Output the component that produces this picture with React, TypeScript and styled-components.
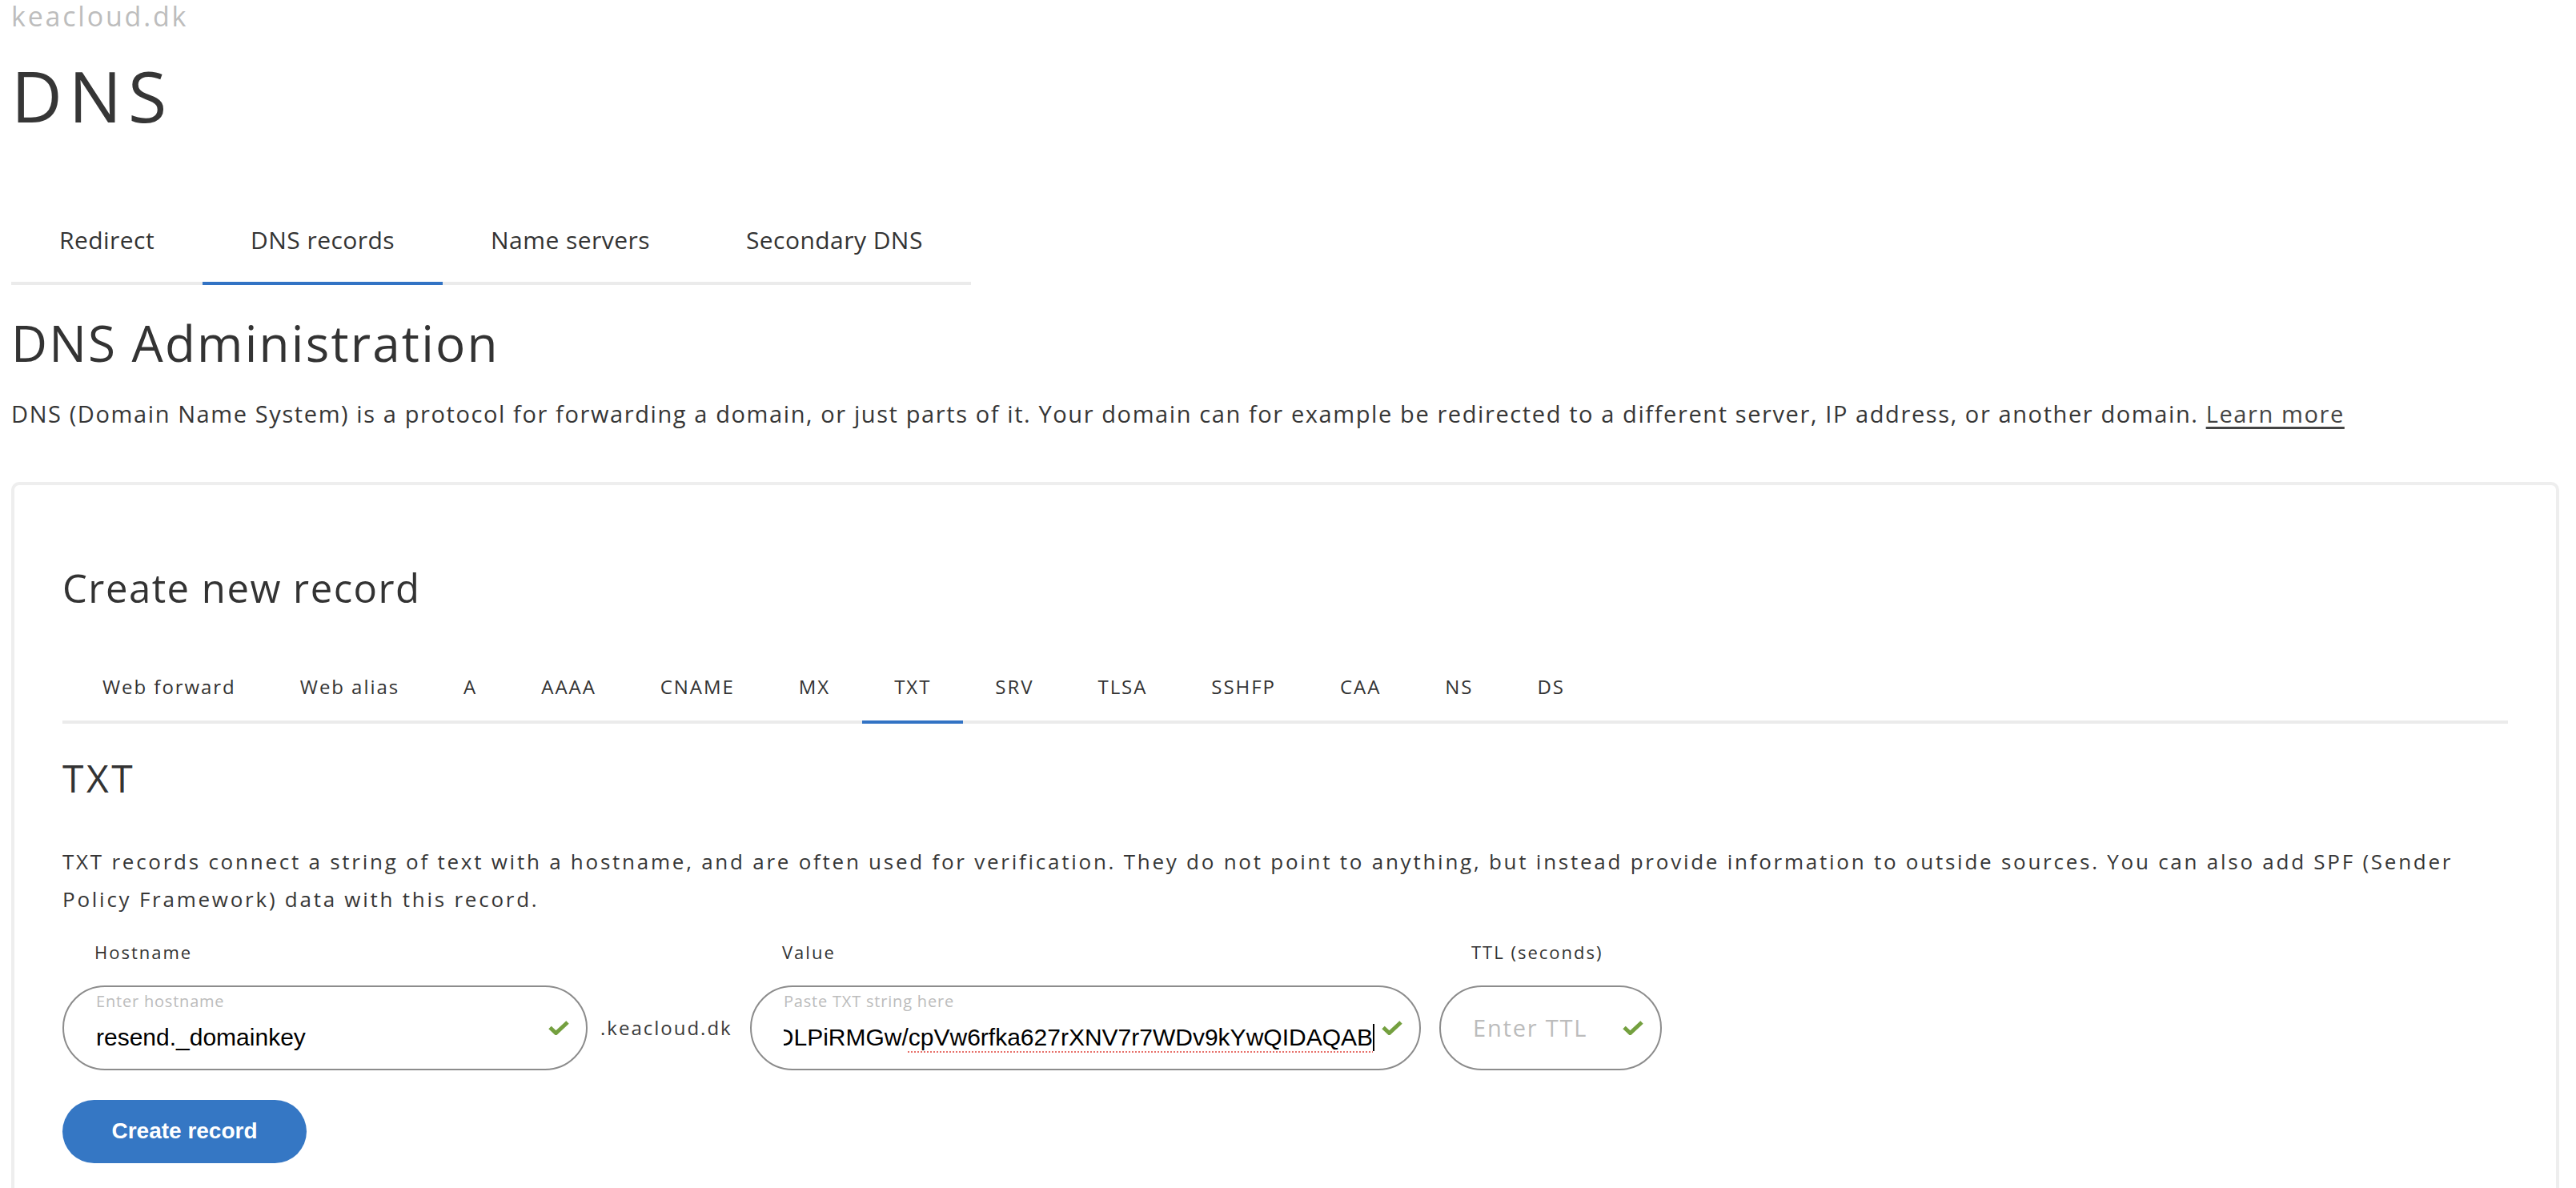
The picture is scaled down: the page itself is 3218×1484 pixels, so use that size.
import React from "react";
import styled, { createGlobalStyle } from "styled-components";

const GlobalStyle = createGlobalStyle`
  html, body {
    margin: 0;
    padding: 0;
    background: #ffffff;
  }
  body {
    font-family: "Open Sans", "Noto Sans", sans-serif;
    color: #333333;
    overflow: hidden;
  }
  * { box-sizing: border-box; }
`;

const Page = styled.div`
  padding: 0 21px 0 14px;
`;

const Domain = styled.div`
  font-size: 34px;
  line-height: 40px;
  letter-spacing: 2.8px;
  color: #bdbdbd;
`;

const PageTitle = styled.h1`
  margin: 29px 0 0;
  font-size: 88px;
  line-height: 100px;
  font-weight: 400;
  letter-spacing: 8px;
  color: #363636;
`;

const MainTabs = styled.nav`
  display: flex;
  width: fit-content;
  margin-top: 91px;
`;

const MainTab = styled.div<{ $active?: boolean }>`
  padding: 20px 60px 32px;
  font-size: 30px;
  line-height: 40px;
  letter-spacing: 0.45px;
  color: #333333;
  border-bottom: 4px solid ${(p) => (p.$active ? "#3273c4" : "#ebebeb")};
  white-space: nowrap;
`;

const SectionTitle = styled.h2`
  margin: 34px 0 0;
  font-size: 62px;
  line-height: 76px;
  font-weight: 400;
  letter-spacing: 2.2px;
  color: #333333;
`;

const Lead = styled.p`
  margin: 31px 0 0;
  font-size: 29px;
  line-height: 40px;
  letter-spacing: 1.6px;
  color: #363636;
  white-space: nowrap;
`;

const LearnMore = styled.a`
  color: #444444;
  text-decoration: underline;
  text-decoration-thickness: 3px;
  text-underline-offset: 5px;
`;

const Card = styled.section`
  margin-top: 65px;
  border: 4px solid #eeeeee;
  border-radius: 10px;
  padding: 98px 60px 200px;
`;

const CardTitle = styled.h2`
  margin: 0;
  font-size: 49px;
  line-height: 60px;
  font-weight: 400;
  letter-spacing: 1.5px;
  color: #333333;
`;

const RecordTabs = styled.div`
  display: flex;
  margin-top: 67px;
  padding-left: 10px;
  border-bottom: 4px solid #ebebeb;
`;

const RecordTab = styled.div<{ $active?: boolean }>`
  padding: 10px 40px 25px;
  margin-bottom: -4px;
  font-size: 24px;
  line-height: 34px;
  letter-spacing: 1.95px;
  color: #333333;
  white-space: nowrap;
  border-bottom: 4px solid ${(p) => (p.$active ? "#3273c4" : "transparent")};
`;

const TypeTitle = styled.h3`
  margin: 38px 0 0;
  font-size: 48px;
  line-height: 60px;
  font-weight: 400;
  letter-spacing: 3.5px;
  color: #333333;
`;

const TypeDesc = styled.p`
  margin: 51px 0 0;
  font-size: 26px;
  line-height: 47px;
  letter-spacing: 2.75px;
  color: #363636;
`;

const FieldRow = styled.div`
  display: flex;
  align-items: flex-end;
  margin-top: 27px;
`;

const Field = styled.div<{ $width: number; $gap?: number }>`
  display: flex;
  flex-direction: column;
  width: ${(p) => p.$width}px;
  margin-left: ${(p) => p.$gap ?? 0}px;
`;

const Label = styled.label`
  padding-left: 40px;
  margin-bottom: 26.5px;
  font-size: 22px;
  line-height: 30px;
  letter-spacing: 2px;
  color: #333333;
`;

const InputBox = styled.div`
  display: flex;
  align-items: stretch;
  height: 106px;
  border: 2px solid #8c8c8c;
  border-radius: 53px;
  padding: 0 21px 0 40px;
  background: #ffffff;
`;

const InputBody = styled.div`
  flex: 1;
  min-width: 0;
  display: flex;
  flex-direction: column;
  padding-top: 6.5px;
  margin-right: 9px;
`;

const FloatLabel = styled.span`
  font-size: 20px;
  line-height: 24px;
  letter-spacing: 0.8px;
  color: #bcbcbc;
  white-space: nowrap;
`;

const ValueViewport = styled.div`
  margin-top: 13px;
  display: flex;
  justify-content: flex-end;
  overflow: hidden;
  white-space: nowrap;
  font-family: "Liberation Sans", Arial, sans-serif;
  font-size: 30px;
  line-height: 40px;
  color: #000000;
`;

const HostValue = styled.div`
  margin-top: 13px;
  white-space: nowrap;
  font-family: "Liberation Sans", Arial, sans-serif;
  font-size: 30px;
  line-height: 40px;
  color: #000000;
`;

const Misspelled = styled.span`
  text-decoration: underline dotted #e8716b;
  text-decoration-thickness: 2px;
  text-underline-offset: 7px;
`;

const Caret = styled.span`
  display: inline-block;
  width: 2px;
  height: 34px;
  margin-top: 3px;
  background: #000000;
  flex: none;
`;

const Placeholder = styled.span`
  flex: 1;
  align-self: center;
  font-size: 29px;
  line-height: 40px;
  letter-spacing: 1.8px;
  color: #bcbcbc;
  white-space: nowrap;
`;

const CheckWrap = styled.span`
  align-self: center;
  display: flex;
  width: 26px;
  height: 18px;
  flex: none;
`;

const Suffix = styled.div`
  width: 203px;
  height: 106px;
  display: flex;
  align-items: center;
  padding-left: 16px;
  font-size: 24px;
  letter-spacing: 2px;
  color: #3a3a3a;
  white-space: nowrap;
`;

const PrimaryButton = styled.button`
  margin-top: 37px;
  width: 305px;
  height: 79px;
  border: none;
  border-radius: 40px;
  background: #3577c4;
  color: #ffffff;
  font-family: "Liberation Sans", Arial, sans-serif;
  font-weight: 700;
  font-size: 28px;
  cursor: pointer;
`;

const Check = () => (
  <CheckWrap>
    <svg width="26" height="18" viewBox="0 0 26 18" fill="none">
      <path d="M2 8.5 L9.5 15.5 L24 2" stroke="#74a03f" strokeWidth="5" strokeLinejoin="miter" />
    </svg>
  </CheckWrap>
);

const mainTabs = ["Redirect", "DNS records", "Name servers", "Secondary DNS"];
const recordTypes = [
  "Web forward",
  "Web alias",
  "A",
  "AAAA",
  "CNAME",
  "MX",
  "TXT",
  "SRV",
  "TLSA",
  "SSHFP",
  "CAA",
  "NS",
  "DS",
];

export default function App() {
  return (
    <>
      <GlobalStyle />
      <Page>
        <Domain>keacloud.dk</Domain>
        <PageTitle>DNS</PageTitle>
        <MainTabs>
          {mainTabs.map((t) => (
            <MainTab key={t} $active={t === "DNS records"}>
              {t}
            </MainTab>
          ))}
        </MainTabs>
        <SectionTitle>DNS Administration</SectionTitle>
        <Lead>
          DNS (Domain Name System) is a protocol for forwarding a domain, or just parts of it. Your domain can for
          example be redirected to a different server, IP address, or another domain.{" "}
          <LearnMore href="#">Learn more</LearnMore>
        </Lead>
        <Card>
          <CardTitle>Create new record</CardTitle>
          <RecordTabs>
            {recordTypes.map((t) => (
              <RecordTab key={t} $active={t === "TXT"}>
                {t}
              </RecordTab>
            ))}
          </RecordTabs>
          <TypeTitle>TXT</TypeTitle>
          <TypeDesc>
            TXT records connect a string of text with a hostname, and are often used for verification. They do not
            point to anything, but instead provide information to outside sources. You can also add SPF (Sender Policy
            Framework) data with this record.
          </TypeDesc>
          <FieldRow>
            <Field $width={656}>
              <Label>Hostname</Label>
              <InputBox>
                <InputBody>
                  <FloatLabel>Enter hostname</FloatLabel>
                  <HostValue>resend._domainkey</HostValue>
                </InputBody>
                <Check />
              </InputBox>
            </Field>
            <Suffix>.keacloud.dk</Suffix>
            <Field $width={838}>
              <Label>Value</Label>
              <InputBox>
                <InputBody>
                  <FloatLabel>Paste TXT string here</FloatLabel>
                  <ValueViewport>
                    <span>p=MIGfMA0GCSqGSIb3DQEBAQUAA4GNADCBiQKBgQDLPiRMGw/</span>
                    <Misspelled>cpVw6rfka627rXNV7r7WDv9kYwQIDAQAB</Misspelled>
                    <Caret />
                  </ValueViewport>
                </InputBody>
                <Check />
              </InputBox>
            </Field>
            <Field $width={278} $gap={23}>
              <Label>TTL (seconds)</Label>
              <InputBox>
                <Placeholder>Enter TTL</Placeholder>
                <Check />
              </InputBox>
            </Field>
          </FieldRow>
          <PrimaryButton>Create record</PrimaryButton>
        </Card>
      </Page>
    </>
  );
}
